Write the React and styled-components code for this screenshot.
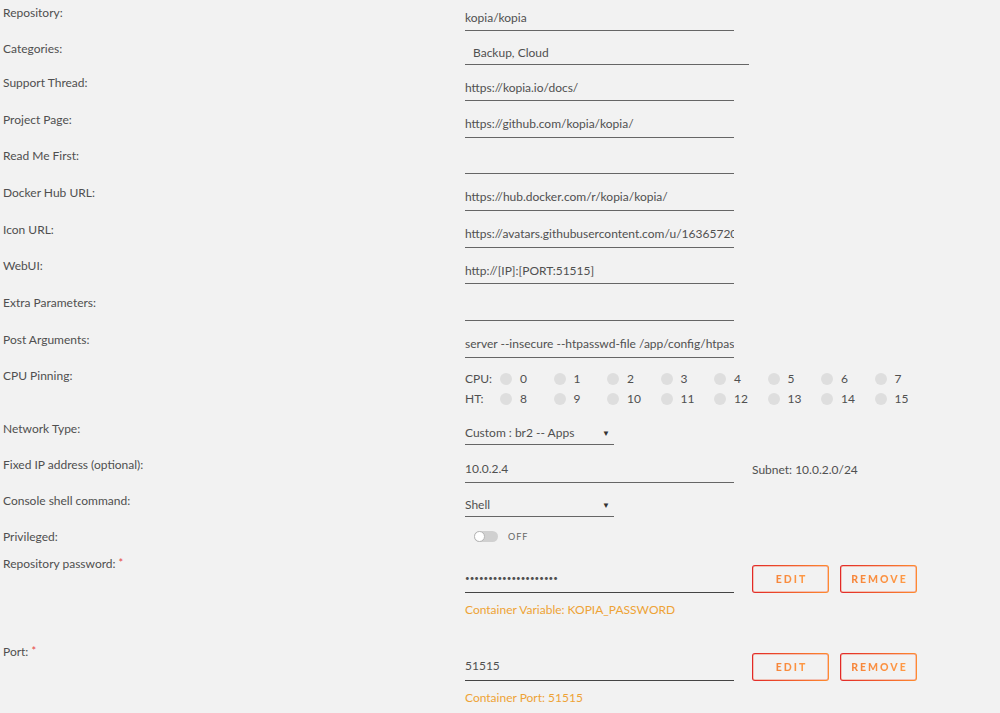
import React from "react";
import styled, { createGlobalStyle } from "styled-components";

const Global = createGlobalStyle`
  html, body { margin: 0; padding: 0; background: #f2f2f2; }
  body { font-family: Lato, "Liberation Sans", sans-serif; font-size: 12px; color: #4f4f4f; }
  * { box-sizing: border-box; }
`;

const Page = styled.div`
  padding: 5px 0 0 3px;
  width: 1000px;
  height: 713px;
  overflow: hidden;
`;

const Row = styled.div`
  display: flex;
  align-items: flex-start;
  height: ${(p) => p.$h}px;
`;

const Label = styled.div`
  width: 462px;
  flex: none;
  line-height: 16px;
  color: #4f4f4f;
  white-space: nowrap;
`;

const Required = styled.span`
  color: #e84545;
  margin-left: 3px;
  font-size: 11px;
  vertical-align: 1px;
`;

const Content = styled.div`
  display: flex;
  flex-direction: column;
  padding-top: ${(p) => p.$pt || 0}px;
`;

const Line = styled.div`
  display: flex;
  align-items: ${(p) => p.$align || "center"};
`;

const TextInput = styled.input`
  width: ${(p) => p.$w || 269}px;
  height: ${(p) => (p.$tall ? 29 : p.$short ? 24 : 26)}px;
  padding: ${(p) => (p.$tall ? "6px 0 6px" : p.$short ? "3px 0 4px" : "4px 0 5px")};
  padding-left: ${(p) => p.$pl || 0}px;
  border: none;
  border-bottom: 1px solid ${(p) => (p.$dark ? "#444" : "#666")};
  background: transparent;
  font-family: Lato, "Liberation Sans", sans-serif;
  font-size: ${(p) => (p.$mask ? 8 : 12)}px;
  line-height: 16px;
  color: #505050;
  outline: none;
  border-radius: 0;
`;

const SelectBox = styled.div`
  width: 149px;
  height: 24px;
  padding: 4px 4px 3px 0;
  display: flex;
  justify-content: space-between;
  align-items: center;
  border-bottom: 1px solid #666;
  line-height: 16px;
  color: #505050;
`;

const Arrow = styled.span`
  font-size: 8px;
  color: #333;
  line-height: 16px;
`;

const Side = styled.span`
  margin-left: 18px;
  color: #505050;
  line-height: 16px;
`;

const CpuGrid = styled.div`
  display: grid;
  grid-template-columns: 35px repeat(8, 53.5px);
  grid-auto-rows: 20px;
  padding-top: 1px;
  align-items: center;
  color: #505050;
`;

const CpuTag = styled.span`
  line-height: 20px;
`;

const CpuItem = styled.label`
  display: flex;
  align-items: center;
  gap: 8px;
  line-height: 20px;
`;

const Dot = styled.span`
  width: 12px;
  height: 12px;
  border-radius: 50%;
  background: #dedede;
  flex: none;
`;

const Toggle = styled.div`
  display: flex;
  align-items: center;
  margin-left: 9px;
  margin-top: 2px;
  gap: 10px;
`;

const Track = styled.span`
  position: relative;
  width: 24px;
  height: 11px;
  border-radius: 6px;
  background: #d0d0d0;
  display: inline-block;
`;

const Knob = styled.span`
  position: absolute;
  left: 0;
  top: 0;
  width: 11px;
  height: 11px;
  border-radius: 50%;
  background: #fff;
  border: 1px solid #b5b5b5;
`;

const ToggleText = styled.span`
  font-size: 9px;
  letter-spacing: 1px;
  color: #666;
`;

const Buttons = styled.div`
  display: flex;
  gap: 11px;
  margin-left: 18px;
`;

const Button = styled.button`
  width: 77px;
  height: 28px;
  padding: 0;
  border: 1px solid transparent;
  border-radius: 3px;
  background: linear-gradient(#f2f2f2, #f2f2f2) padding-box,
    linear-gradient(90deg, #e22828 0%, #ff8c2f 100%) border-box;
  box-shadow: inset 0 0 0 0.5px rgba(240, 80, 40, 0.6);
  font-family: Lato, "Liberation Sans", sans-serif;
  font-weight: 900;
  font-size: 10.5px;
  letter-spacing: 2px;
  text-transform: uppercase;
  cursor: pointer;
  display: flex;
  align-items: center;
  justify-content: center;
`;

const ButtonText = styled.span`
  background: linear-gradient(90deg, #f6843a 0%, #ff9a45 100%);
  -webkit-background-clip: text;
  background-clip: text;
  color: transparent;
  padding-left: 2px;
`;

const Helper = styled.div`
  margin-top: 9px;
  line-height: 16px;
  color: #eea336;
`;

const simpleRows = [
  ["Support Thread:", "https://kopia.io/docs/"],
  ["Project Page:", "https://github.com/kopia/kopia/"],
  ["Read Me First:", ""],
  ["Docker Hub URL:", "https://hub.docker.com/r/kopia/kopia/"],
  ["Icon URL:", "https://avatars.githubusercontent.com/u/16365720?v=4"],
  ["WebUI:", "http://[IP]:[PORT:51515]"],
  ["Extra Parameters:", ""],
  ["Post Arguments:", "server --insecure --htpasswd-file /app/config/htpasswd"],
];

const cpu = [0, 1, 2, 3, 4, 5, 6, 7];
const ht = [8, 9, 10, 11, 12, 13, 14, 15];

function EnvRow({ label, value, mask, helper }) {
  return (
    <Row $h={88}>
      <Label>
        {label}
        <Required>*</Required>
      </Label>
      <Content $pt={9}>
        <Line $align="flex-end">
          <TextInput
            $tall
            $dark
            $mask={mask}
            readOnly
            type={mask ? "password" : "text"}
            value={value}
          />
          <Buttons>
            <Button>
              <ButtonText>Edit</ButtonText>
            </Button>
            <Button>
              <ButtonText>Remove</ButtonText>
            </Button>
          </Buttons>
        </Line>
        <Helper>{helper}</Helper>
      </Content>
    </Row>
  );
}

function CpuRow({ tag, cores }) {
  return (
    <>
      <CpuTag>{tag}</CpuTag>
      {cores.map((n) => (
        <CpuItem key={n}>
          <Dot />
          {n}
        </CpuItem>
      ))}
    </>
  );
}

export default function App() {
  return (
    <>
      <Global />
      <Page>
        <Row $h={36}>
          <Label>Repository:</Label>
          <TextInput readOnly value="kopia/kopia" />
        </Row>
        <Row $h={34}>
          <Label>Categories:</Label>
          <TextInput readOnly $w={284} $pl={8} $short value="Backup, Cloud" />
        </Row>
        {simpleRows.map(([l, v]) => (
          <Row key={l} $h={36.67}>
            <Label>{l}</Label>
            <TextInput readOnly value={v} />
          </Row>
        ))}
        <Row $h={52.67}>
          <Label>CPU Pinning:</Label>
          <CpuGrid>
            <CpuRow tag="CPU:" cores={cpu} />
            <CpuRow tag="HT:" cores={ht} />
          </CpuGrid>
        </Row>
        <Row $h={36}>
          <Label>Network Type:</Label>
          <SelectBox>
            <span>Custom : br2 -- Apps</span>
            <Arrow>▼</Arrow>
          </SelectBox>
        </Row>
        <Row $h={36}>
          <Label>Fixed IP address (optional):</Label>
          <Line>
            <TextInput readOnly value="10.0.2.4" />
            <Side>Subnet: 10.0.2.0/24</Side>
          </Line>
        </Row>
        <Row $h={36}>
          <Label>Console shell command:</Label>
          <SelectBox>
            <span>Shell</span>
            <Arrow>▼</Arrow>
          </SelectBox>
        </Row>
        <Row $h={26}>
          <Label>Privileged:</Label>
          <Toggle>
            <Track>
              <Knob />
            </Track>
            <ToggleText>OFF</ToggleText>
          </Toggle>
        </Row>
        <EnvRow
          label="Repository password:"
          mask
          value="kopiapassword1234567"
          helper="Container Variable: KOPIA_PASSWORD"
        />
        <EnvRow label="Port:" value="51515" helper="Container Port: 51515" />
      </Page>
    </>
  );
}
